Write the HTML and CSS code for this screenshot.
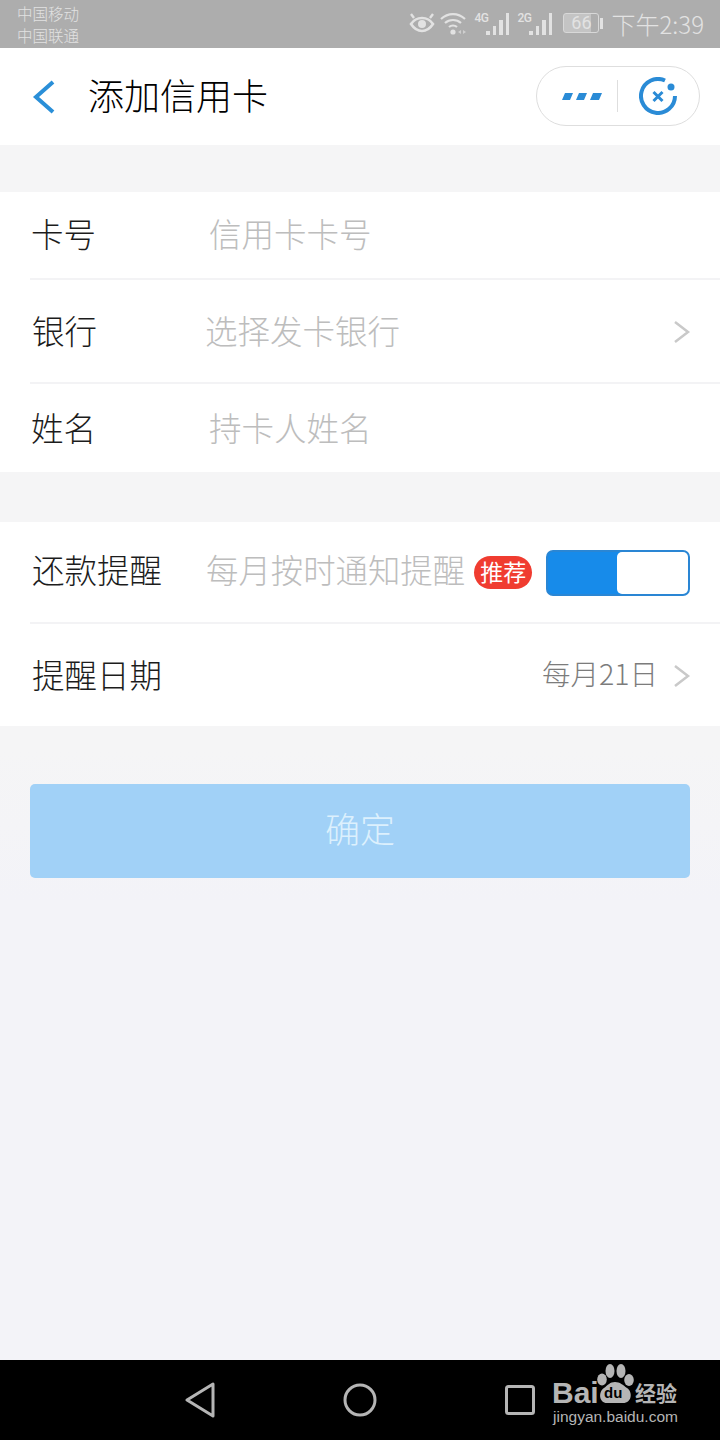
FILE: index.html
```html
<!DOCTYPE html>
<html lang="zh-CN">
<head>
    <meta charset="UTF-8">
    <meta name="viewport" content="width=device-width, initial-scale=1.0">
    <title>添加信用卡</title>
    <link rel="stylesheet" href="styles.css">
</head>
<body>
    <div class="statusbar">
        <div class="carriers">
            <span>中国移动</span>
            <span>中国联通</span>
        </div>
        <div class="status-right">
            <svg class="st-eye" width="26" height="22" viewBox="0 0 26 22" fill="none" stroke="#e2e2e2" stroke-width="2.6">
                <path d="M2 12c3-4.500 7-6 11-6s8 1.500 11 6c-3 4.500-7 7-11 7s-8-2.500-11-7z"/>
                <circle cx="13" cy="12" r="4" fill="#e2e2e2" stroke="none"/>
                <path d="M5 6L2 2M21 6l3-4" stroke-width="2.400"/>
            </svg>
            <svg class="st-wifi" width="28" height="24" viewBox="0 0 28 24" fill="none" stroke="#e2e2e2" stroke-width="2.200">
                <path d="M1 8c7-6.500 17-6.500 24 0M5 12c4.500-4 11.500-4 16 0M9 16c2.300-2 5.700-2 8 0"/>
                <circle cx="13" cy="21" r="2.600" fill="#e2e2e2" stroke="none"/>
                <path d="M18 21l3-2v4zM23 19l3 2-3 2z" fill="#cfcfcf" stroke="none"/>
            </svg>
            <div class="signal signal-a">
                <b>4G</b>
                <i class="s1"></i><i class="s2"></i><i class="s3"></i><i class="s4"></i>
            </div>
            <div class="signal signal-b">
                <b>2G</b>
                <i class="s1"></i><i class="s2"></i><i class="s3"></i><i class="s4"></i>
            </div>
            <div class="battery"><span>66</span></div>
            <span class="battery-tip"></span>
            <span class="clock">下午2:39</span>
        </div>
    </div>

    <header class="topbar">
        <svg class="back" width="24" height="34" viewBox="0 0 24 34" fill="none" stroke="#2a8fd8" stroke-width="4">
            <path d="M21 2L4 17l17 15"/>
        </svg>
        <h1>添加信用卡</h1>
        <div class="capsule">
            <svg width="40" height="7" viewBox="0 0 40 7" fill="#2a8bd6">
                <path d="M3 0h8l-3 7H0zM17 0h8l-3 7h-8zM31 0h9l-3 7h-9z"/>
            </svg>
            <span class="capsule-line"></span>
            <svg width="38" height="38" viewBox="0 0 38 38" fill="none" stroke="#2a8bd6">
                <path d="M26 3.500A17 17 0 1 0 36 19" stroke-width="4"/>
                <path d="M14.500 15l9 9M23.500 15l-9 9" stroke-width="3"/>
                <circle cx="32" cy="10" r="3.500" fill="#2a8bd6" stroke="none"/>
            </svg>
        </div>
    </header>

    <section class="group first">
        <div class="row row-card">
            <label>卡号</label>
            <span class="hint">信用卡卡号</span>
        </div>
        <div class="row row-bank">
            <label>银行</label>
            <span class="hint hint-bank">选择发卡银行</span>
            <svg class="chevron" width="18" height="24" viewBox="0 0 18 24" fill="none" stroke="#c9c9c9" stroke-width="2.500">
                <path d="M2 2l13 10L2 22"/>
            </svg>
        </div>
        <div class="row row-name">
            <label>姓名</label>
            <span class="hint">持卡人姓名</span>
        </div>
    </section>

    <section class="group second">
        <div class="row row-remind">
            <label>还款提醒</label>
            <span class="hint hint-remind">每月按时通知提醒</span>
            <span class="tag">推荐</span>
            <div class="toggle"><span class="knob"></span></div>
        </div>
        <div class="row row-date">
            <label>提醒日期</label>
            <span class="date">每月21日</span>
            <svg class="chevron" width="18" height="24" viewBox="0 0 18 24" fill="none" stroke="#c9c9c9" stroke-width="2.500">
                <path d="M2 2l13 10L2 22"/>
            </svg>
        </div>
    </section>

    <button class="confirm" type="button">确定</button>

    <nav class="navbar">
        <svg class="nav-back" width="30" height="36" viewBox="0 0 30 36" fill="none" stroke="#b5b5b5" stroke-width="3" stroke-linejoin="round">
            <path d="M28 2v32L2 18z"/>
        </svg>
        <svg class="nav-home" width="34" height="34" viewBox="0 0 34 34" fill="none" stroke="#b5b5b5" stroke-width="3">
            <circle cx="17" cy="17" r="15"/>
        </svg>
        <svg class="nav-recent" width="30" height="30" viewBox="0 0 30 30" fill="none" stroke="#b5b5b5" stroke-width="3" stroke-linejoin="round">
            <rect x="1.500" y="1.500" width="27" height="27" rx="2"/>
        </svg>
        <div class="watermark">
            <span class="wm-bai">Bai</span>
            <svg class="wm-paw" width="38" height="42" viewBox="0 0 38 42" fill="#b5b5b5">
                <ellipse cx="13" cy="8" rx="4.500" ry="7"/>
                <ellipse cx="24" cy="8" rx="4.500" ry="7"/>
                <ellipse cx="5" cy="16.500" rx="4.800" ry="6"/>
                <ellipse cx="32" cy="17" rx="4.800" ry="6"/>
                <path d="M18 19c5 0 8 3 12 6 6 4 5 15-4 15H10C2 40 1 29 7 25c4-3 6-6 11-6z"/>
            </svg>
            <span class="wm-du">du</span>
            <span class="wm-cn">经验</span>
            <div class="wm-url">jingyan.baidu.com</div>
        </div>
    </nav>
</body>
</html>
```

FILE: styles.css
```css
* {
    margin: 0;
    padding: 0;
    box-sizing: border-box;
}

body {
    width: 720px;
    height: 1440px;
    position: relative;
    overflow: hidden;
    background: linear-gradient(to bottom, #f5f5f6 750px, #f3f3f8 900px);
    font-family: "Noto Sans CJK SC", "Liberation Sans", sans-serif;
}

.statusbar {
    height: 48px;
    background: #adadad;
    color: #e2e2e2;
    display: flex;
    justify-content: space-between;
    padding: 0 16px 0 17px;
}

.carriers {
    display: flex;
    flex-direction: column;
    font-size: 15.500px;
    font-weight: 300;
    line-height: 22px;
    padding-top: 2px;
}

.status-right {
    display: flex;
    align-items: center;
    padding-bottom: 2px;
}

.st-wifi {
    margin-left: 5px;
}

.signal {
    position: relative;
    display: flex;
    align-items: flex-end;
    gap: 3px;
    height: 23px;
    padding-left: 12px;
}

.signal-a {
    margin-left: 6px;
}

.signal-b {
    margin-left: 8px;
}

.signal b {
    position: absolute;
    left: 0;
    top: -1px;
    font: 500 12px "Roboto", sans-serif;
    letter-spacing: -0.5px;
}

.signal i {
    display: block;
    width: 3.500px;
    background: #e2e2e2;
}

.s1 { height: 4px; }
.s2 { height: 9px; }
.s3 { height: 15px; }
.s4 { height: 22px; }

.battery {
    width: 36px;
    height: 20px;
    margin-left: 11px;
    border: 1px solid #d8d8d8;
    border-radius: 3px;
    background: linear-gradient(to right, #c4c4c4 80%, transparent 80%);
    text-align: center;
    font: 18px/18px "Roboto", sans-serif;
}

.battery-tip {
    width: 3px;
    height: 11px;
    margin-left: 1px;
    background: #e2e2e2;
}

.clock {
    font-size: 24px;
    font-weight: 300;
    margin-left: 8px;
}

.topbar {
    height: 97px;
    background: #fff;
    display: flex;
    align-items: center;
    position: relative;
    padding-left: 32px;
}

.topbar h1 {
    font-size: 36px;
    font-weight: 300;
    color: #000;
    margin: 0 0 6px 32px;
}

.capsule {
    position: absolute;
    left: 536px;
    top: 18px;
    width: 164px;
    height: 60px;
    border: 1px solid #dedede;
    border-radius: 30px;
    display: flex;
    align-items: center;
    padding-left: 25px;
}

.capsule-line {
    width: 1px;
    height: 32px;
    background: #dedede;
    margin: 0 21px 0 15px;
}

.group {
    background: #fff;
}

.first {
    margin-top: 47px;
}

.second {
    margin-top: 50px;
}

.row {
    display: flex;
    align-items: center;
    position: relative;
    padding-left: 32px;
    font-size: 32.500px;
    font-weight: 300;
}

.row + .row::before {
    content: "";
    position: absolute;
    left: 30px;
    right: 0;
    top: 0;
    height: 2px;
    background: #f3f3f5;
}

.row label {
    width: 177px;
    flex: none;
    color: #1c1c1c;
    margin-bottom: 5px;
}

.hint {
    color: #bdbdbd;
    margin-bottom: 5px;
}

.row-card { height: 86px; padding-left: 31px; }
.row-bank { height: 104px; }
.row-name { height: 90px; padding-left: 31px; }
.row-remind { height: 100px; }
.row-date { height: 104px; }

.row-card label,
.row-name label {
    width: 178px;
}

.row-bank label,
.row-bank .hint,
.row-name label,
.row-name .hint,
.row-date label {
    margin-bottom: 1px;
}

.hint-bank {
    margin-left: -4px;
}

.row-remind label {
    width: 174px;
    margin-bottom: 7px;
}

.hint-remind {
    font-size: 32.400px;
    margin-bottom: 7px;
}

.tag {
    margin: 1px 0 0 9px;
    width: 58px;
    height: 33px;
    border-radius: 17px;
    background: #f03c30;
    color: #fff;
    font-size: 23px;
    font-weight: 400;
    line-height: 31px;
    text-align: center;
}

.toggle {
    margin: 2px 0 0 14px;
    width: 144px;
    height: 46px;
    border: 2px solid #2a86d4;
    border-radius: 7px;
    background: #178bea;
    display: flex;
    justify-content: flex-end;
}

.knob {
    width: 71px;
    background: #fff;
    border-radius: 5px;
}

.chevron {
    position: absolute;
    right: 29px;
    top: 50%;
    margin-top: -10px;
}

.date {
    position: absolute;
    right: 62px;
    font-size: 28.500px;
    color: #7c7c7c;
    margin-bottom: 4px;
}

.confirm {
    display: block;
    width: 660px;
    height: 94px;
    margin: 58px 0 0 30px;
    padding-bottom: 7px;
    border: none;
    border-radius: 5px;
    background: #a1d1f7;
    color: #dcf0fd;
    font-family: inherit;
    font-size: 35px;
    font-weight: 300;
}

.navbar {
    position: absolute;
    left: 0;
    right: 0;
    bottom: 0;
    height: 80px;
    background: #000;
    color: #b5b5b5;
}

.navbar svg {
    position: absolute;
}

.nav-back {
    left: 185px;
    top: 22px;
}

.nav-home {
    left: 343px;
    top: 23px;
}

.nav-recent {
    left: 505px;
    top: 25px;
}

.watermark {
    position: absolute;
    left: 552px;
    top: 0;
    width: 132px;
    height: 70px;
}

.wm-bai {
    position: absolute;
    left: 0;
    top: 16px;
    font: bold 30px/34px "Liberation Sans", sans-serif;
}

.navbar .wm-paw {
    left: 45px;
    top: 3px;
}

.wm-du {
    position: absolute;
    left: 52px;
    top: 24px;
    color: #000;
    font: bold 15px/18px "Liberation Sans", sans-serif;
}

.wm-cn {
    position: absolute;
    left: 83px;
    top: 19px;
    font-size: 21px;
    line-height: 26px;
    font-weight: 700;
}

.wm-url {
    position: absolute;
    left: 1px;
    top: 47px;
    font: 15.500px/20px "Liberation Sans", sans-serif;
    white-space: nowrap;
}
```
